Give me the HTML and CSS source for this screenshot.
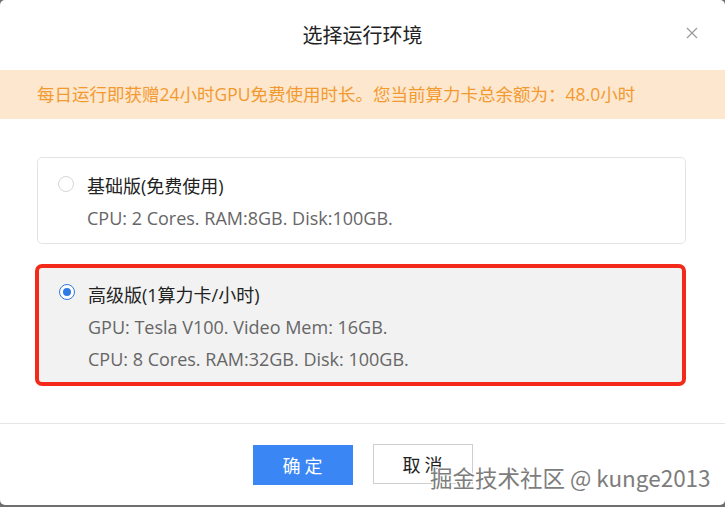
FILE: index.html
```html
<!DOCTYPE html>
<html lang="zh-CN">
<head>
  <meta charset="UTF-8">
  <meta name="viewport" content="width=device-width, initial-scale=1.0">
  <title>选择运行环境</title>
  <link rel="stylesheet" href="styles.css">
</head>
<body>
<div class="dialog">
  <div class="dialog-header">
    <span></span>
    <div class="dialog-title">选择运行环境</div>
    <button class="close-btn" aria-label="关闭">
      <svg width="12" height="12" viewBox="0 0 12 12"><path d="M1 1 L11 11 M11 1 L1 11" stroke="#999" stroke-width="1.2" fill="none"/></svg>
    </button>
  </div>

  <div class="notice">每日运行即获赠24小时GPU免费使用时长。您当前算力卡总余额为：48.0小时</div>

  <div class="options">
    <label class="option">
      <span class="radio"></span>
      <div class="option-body">
        <div class="option-name">基础版(免费使用)</div>
        <div class="option-desc">CPU: 2 Cores. RAM:8GB. Disk:100GB.</div>
      </div>
    </label>
    <label class="option selected">
      <span class="radio checked"></span>
      <div class="option-body">
        <div class="option-name">高级版(1算力卡/小时)</div>
        <div class="option-desc">GPU: Tesla V100. Video Mem: 16GB.</div>
        <div class="option-desc">CPU: 8 Cores. RAM:32GB. Disk: 100GB.</div>
      </div>
    </label>
  </div>

  <div class="dialog-footer">
    <button class="btn btn-primary">确定</button>
    <button class="btn btn-default">取消</button>
  </div>

  <div class="watermark">掘金技术社区 @ kunge2013</div>
</div>
</body>
</html>
```

FILE: styles.css
```css
body {
  margin: 0;
  padding: 0;
  background-color: #6e6e6e;
  font-family: "Open Sans", "Noto Sans CJK SC", sans-serif;
  color: #333;
}
.dialog {
  position: relative;
  width: 725px;
  height: 505px;
  background: #fff;
  border-radius: 5px;
  overflow: hidden;
}
.dialog-header {
  height: 70px;
  display: grid;
  grid-template-columns: 1fr auto 1fr;
  align-items: center;
}
.dialog-title {
  font-size: 20px;
  color: #222;
  padding-bottom: 2px;
}
.close-btn {
  justify-self: end;
  margin-right: 27px;
  margin-bottom: 5px;
  padding: 0;
  border: none;
  background: none;
  display: flex;
  cursor: pointer;
}
.notice {
  height: 49px;
  line-height: 49px;
  padding-left: 37px;
  background: #fde7cf;
  color: #f39a2f;
  font-size: 17.5px;
}
.options {
  padding: 38px 39px 37px 37px;
  display: flex;
  flex-direction: column;
  gap: 20px;
}
.option {
  display: flex;
  align-items: flex-start;
  gap: 13px;
  padding: 12px 20px 9px 20px;
  border: 1px solid #e3e3e3;
  border-radius: 5px;
  cursor: pointer;
}
.option.selected {
  margin-left: -2px;
  background: #f2f2f2;
  border: 4px solid #f32a1a;
  border-radius: 7px;
  padding: 11px 20px 7px 20px;
}
.radio {
  flex: none;
  width: 14px;
  height: 14px;
  margin-top: 6px;
  border: 1px solid #d6d6d6;
  border-radius: 50%;
  background: #fff;
  display: flex;
  align-items: center;
  justify-content: center;
}
.radio.checked {
  border-color: #2f7ae5;
  margin-top: 5px;
}
.radio.checked::after {
  content: "";
  width: 8px;
  height: 8px;
  border-radius: 50%;
  background: #2f7ae5;
}
.option-name {
  font-size: 18px;
  line-height: 32px;
  color: #222;
}
.option-desc {
  font-size: 18px;
  line-height: 32px;
  color: #666;
}
.dialog-footer {
  border-top: 1px solid #e6e6e6;
  padding-top: 21px;
  display: flex;
  justify-content: center;
  gap: 20px;
}
.btn {
  width: 100px;
  height: 40px;
  font-family: "Noto Sans CJK SC", sans-serif;
  font-size: 18px;
  letter-spacing: 4px;
  text-indent: 4px;
  border-radius: 0;
  cursor: pointer;
}
.btn-primary {
  background: #3a86f4;
  color: #fff;
  border: none;
}
.btn-default {
  background: #fff;
  color: #222;
  border: 1px solid #cfcfcf;
  margin-top: -1px;
}
.watermark {
  position: absolute;
  left: 430px;
  top: 461px;
  font-family: "Noto Sans CJK SC", sans-serif;
  font-size: 22.5px;
  color: #7d7d7d;
  white-space: nowrap;
  text-shadow: 1px 1px 0 #fff, -1px -1px 0 #fff, 1px -1px 0 #fff, -1px 1px 0 #fff;
}
```
